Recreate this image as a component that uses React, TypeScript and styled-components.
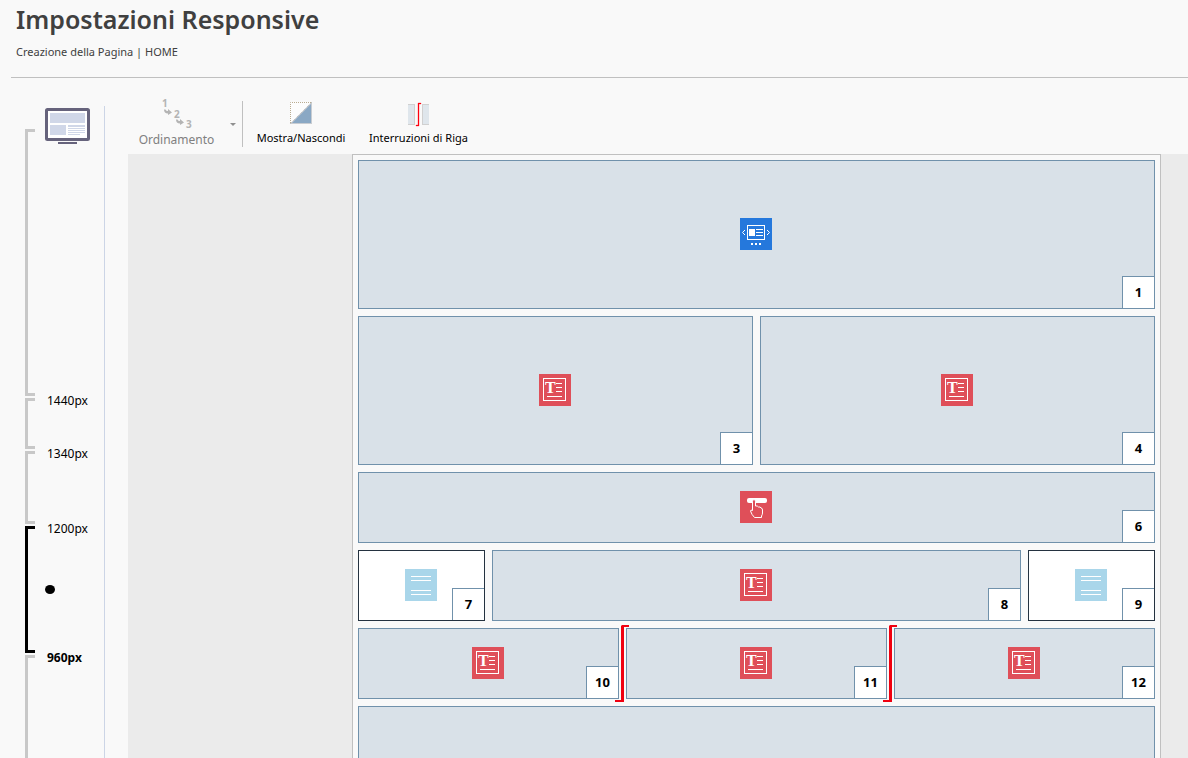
import React from "react";
import styled, { createGlobalStyle, css } from "styled-components";

const GlobalStyle = createGlobalStyle`
  * { box-sizing: border-box; }
  body {
    margin: 0;
    background: #f9f9f9;
    color: #000;
    font-family: "Noto Sans", "Open Sans", sans-serif;
    font-size: 12px;
  }
`;

const Shell = styled.div`
  display: flex;
  flex-direction: column;
  height: 100vh;
  overflow: hidden;
`;

const Header = styled.header`
  flex: none;
  margin-left: 11px;
  padding: 1px 5px 16px;
  border-bottom: 1px solid #c0c0c0;
  color: #404040;
`;

const Title = styled.h1`
  margin: 0;
  font-size: 25px;
  line-height: 36px;
  font-weight: 600;
`;

const Subtitle = styled.p`
  margin: 6px 0 0;
  font-size: 11px;
  line-height: 18px;
`;

const Body = styled.div`
  display: flex;
  flex: 1;
  min-height: 0;
`;

const Ruler = styled.aside`
  flex: none;
  width: 105px;
  margin-top: 28px;
  padding: 23px 0 0 25px;
  border-right: 1px solid #ccd5e6;
`;

const Segments = styled.ol`
  display: flex;
  flex-direction: column;
  gap: 2px;
  height: 100%;
  margin: 0;
  padding: 0;
  list-style: none;
`;

const Segment = styled.li<{ $size?: number }>`
  display: flex;
  gap: 10px;
  ${(p) => (p.$size ? css`flex: none; height: ${p.$size}px;` : css`flex: 1;`)}
`;

const Bracket = styled.span<{ $active?: boolean; $open?: boolean }>`
  width: 10px;
  border: 3px solid ${(p) => (p.$active ? "#000" : "#c8c8c8")};
  border-right: 0;
  ${(p) => p.$open && css`border-bottom: 0;`}
`;

const Marker = styled.div`
  display: grid;
  align-items: start;
  & > * { grid-area: 1 / 1; }
`;

const Width = styled.span<{ $bold?: boolean }>`
  margin-top: -6px;
  padding-left: 2px;
  line-height: 18px;
  font-weight: ${(p) => (p.$bold ? 700 : 400)};
`;

const Dot = styled.svg`
  align-self: center;
`;

const Monitor = styled.svg`
  margin-top: -21px;
`;

const Main = styled.main`
  display: flex;
  flex: 1;
  flex-direction: column;
  min-width: 0;
  margin-left: 23px;
`;

const Toolbar = styled.div`
  display: flex;
  flex: none;
  height: 56px;
  margin-top: 20px;
  padding-left: 4px;
`;

const ToolButton = styled.button<{ $width: number }>`
  display: flex;
  flex: none;
  flex-direction: column;
  align-items: center;
  width: ${(p) => p.$width}px;
  padding: 0;
  border: 0;
  background: none;
  color: #000;
  font: inherit;
  font-size: 11px;
  line-height: 18px;
  white-space: nowrap;
  &:disabled { color: #808080; }
  svg { flex: none; overflow: visible; }
`;

const OrderButton = styled(ToolButton)`
  font-size: 12px;
  line-height: 22px;
`;

const ArrowButton = styled(ToolButton)`
  padding-top: 10px;
`;

const Divider = styled.span`
  flex: none;
  width: 1px;
  height: 46px;
  margin: 3px 2px 0 0;
  background: #c0c0c0;
`;

const Canvas = styled.div`
  flex: 1;
  min-height: 0;
  overflow: hidden;
  padding: 0 27px 0 224px;
  background: #ebebeb;
`;

const Sheet = styled.div`
  display: grid;
  grid-template-columns: repeat(6, 1fr);
  grid-auto-rows: 71px;
  gap: 7px;
  padding: 5px;
  border: 1px solid #c0c0c0;
  background: #f9f9f9;
`;

const Cell = styled.div<{ $cols: number; $rows: number; $empty?: boolean }>`
  position: relative;
  display: grid;
  grid-column: span ${(p) => p.$cols};
  grid-row: span ${(p) => p.$rows};
  border: 1px solid ${(p) => (p.$empty ? "#243240" : "#7091ab")};
  background: ${(p) => (p.$empty ? "#fff" : "#d9e1e8")};
`;

const CellIcon = styled.svg`
  grid-area: 1 / 1;
  place-self: center;
  margin: 0 1px 1px 0;
`;

const Badge = styled.span`
  grid-area: 1 / 1;
  place-self: end;
  width: 32px;
  height: 32px;
  border: solid #7091ab;
  border-width: 1px 0 0 1px;
  background: #fff;
  font-size: 13px;
  line-height: 30px;
  font-weight: 700;
  text-align: center;
`;

const BreakMark = styled.svg`
  position: absolute;
  z-index: 1;
  top: -4px;
  right: -11px;
`;

type Kind = "slider" | "text" | "button" | "blank";

const art: Record<Kind, { fill: string; drawing: React.ReactNode }> = {
  slider: {
    fill: "#2578dc",
    drawing: (
      <>
        <rect x="7.5" y="7.5" width="17" height="14" fill="none" stroke="#fff" />
        <path
          fill="#fff"
          d="M9 11h6v7H9zM16 11h7v1h-7zM16 14h7v1h-7zM16 17h7v1h-7zM11 25h2v2h-2zM15 25h2v2h-2zM19 25h2v2h-2z"
        />
        <path d="M5 12 2.500 14.500 5 17M27 12l2.500 2.500L27 17" fill="none" stroke="#fff" />
      </>
    ),
  },
  text: {
    fill: "#df4f59",
    drawing: (
      <>
        <rect x="4.500" y="4.500" width="22" height="22" fill="none" stroke="#fff" />
        <text x="6" y="19" fill="#fff" fontFamily="Liberation Serif, serif" fontWeight="700" fontSize="16">
          T
        </text>
        <path fill="#fff" d="M17 9h6v1h-6zM17 13h6v1h-6zM17 17h6v1h-6zM8 22h15v1H8z" />
      </>
    ),
  },
  button: {
    fill: "#df4f59",
    drawing: (
      <>
        <rect x="7" y="7" width="20" height="5" rx="2" fill="#fff" />
        <path
          d="M12.500 19.500V10.500q0-2 1.500-2t1.500 2V15q2-.500 3 1 2-.500 2.500 1 1.500 0 1.500 2v3q0 1.500-1 3v1.500h-7q-3-3-4-6.500 0-1.500 2-.500z"
          fill="#df4f59"
          stroke="#fff"
        />
      </>
    ),
  },
  blank: {
    fill: "#a9d6ea",
    drawing: <path fill="#fff" d="M6 7h20v1H6zM6 11h20v1H6zM6 21h20v1H6zM6 25h20v1H6z" />,
  },
};

const cells: { n?: number; cols: number; rows: number; kind?: Kind; lineBreak?: boolean }[] = [
  { n: 1, cols: 6, rows: 2, kind: "slider" },
  { n: 3, cols: 3, rows: 2, kind: "text" },
  { n: 4, cols: 3, rows: 2, kind: "text" },
  { n: 6, cols: 6, rows: 1, kind: "button" },
  { n: 7, cols: 1, rows: 1, kind: "blank" },
  { n: 8, cols: 4, rows: 1, kind: "text" },
  { n: 9, cols: 1, rows: 1, kind: "blank" },
  { n: 10, cols: 2, rows: 1, kind: "text", lineBreak: true },
  { n: 11, cols: 2, rows: 1, kind: "text", lineBreak: true },
  { n: 12, cols: 2, rows: 1, kind: "text" },
  { cols: 6, rows: 2 },
];

const segments = [
  { size: 267 },
  { size: 51, label: "1440px" },
  { size: 73, label: "1340px" },
  { size: 127, label: "1200px", active: true },
  { label: "960px", bold: true },
];

function MonitorIcon() {
  return (
    <Monitor width="45" height="36" aria-label="Desktop">
      <rect x="1.500" y="1.500" width="42" height="30" rx="1" fill="#fff" stroke="#66637c" strokeWidth="3" />
      <path fill="#d0d7e8" d="M5 5h35v10H5zM5 17h16v10H5zM23 17h17v2H23zM23 20h17v1H23zM23 22h17v1H23zM23 24h17v1H23zM23 26h12v1H23z" />
      <path fill="#66637c" d="M13 34h19v2H13z" />
    </Monitor>
  );
}

function OrderIcon() {
  return (
    <svg width="35" height="31" fill="#b4b4b4" fontFamily="Noto Sans, sans-serif" fontSize="10" fontWeight="700">
      <text x="3" y="9">1</text>
      <text x="15" y="20">2</text>
      <text x="27" y="30">3</text>
      <path d="M5 11.500h1.500q.500 1.500 2.500 1.500V11l4 3.500-4 2.500v-1.500q-4 0-4-4zM17 21.500h1.500q.500 1.500 2.500 1.500V21l4 3.500-4 2.500v-1.500q-4 0-4-4z" />
    </svg>
  );
}

function ShowHideIcon() {
  return (
    <svg width="22" height="31">
      <path d="M0 4h21L0 26z" fill="#fff" opacity="0.6" />
      <path d="M22 4v22H0z" fill="#c9cdd2" />
      <path d="M21 6v19H2z" fill="#8aa8c4" />
      <path d="M0.500 25V4.500H21" fill="none" stroke="#b9ab90" strokeDasharray="1 1" />
      <path d="M0 26 22 4" stroke="#b4b4b4" strokeDasharray="1 1" />
    </svg>
  );
}

function RowBreakIcon() {
  return (
    <svg width="21" height="31">
      <path d="M0 6h7v20H0zM14 6h7v20h-7z" fill="#dfe6ec" />
      <path d="M0 6.500h7M14 6.500h7M0 26.500h7M14 26.500h7M6.500 6v21M14.500 6v21" stroke="#d0d0d0" />
      <path d="M10 5h3v1h-2v22H8v-1h2z" fill="#ff0010" stroke="#ff0010" strokeWidth="0.300" />
    </svg>
  );
}

export default function App() {
  return (
    <>
      <GlobalStyle />
      <Shell>
        <Header>
          <Title>Impostazioni Responsive</Title>
          <Subtitle>Creazione della Pagina | HOME</Subtitle>
        </Header>
        <Body>
          <Ruler>
            <Segments>
              {segments.map((s, i) => (
                <Segment key={i} $size={s.size}>
                  <Bracket $active={s.active} $open={!s.size} />
                  <Marker>
                    {s.label ? <Width $bold={s.bold}>{s.label}</Width> : <MonitorIcon />}
                    {s.active && (
                      <Dot width="10" height="9">
                        <ellipse cx="5" cy="4.500" rx="5" ry="4.500" />
                      </Dot>
                    )}
                  </Marker>
                </Segment>
              ))}
            </Segments>
          </Ruler>
          <Main>
            <Toolbar>
              <OrderButton $width={89} disabled>
                <OrderIcon />
                Ordinamento
              </OrderButton>
              <ArrowButton $width={21} disabled aria-label="Opzioni di ordinamento">
                <svg width="5" height="30">
                  <path d="M1 15h6L4 18z" fill="#909090" />
                </svg>
              </ArrowButton>
              <Divider />
              <ToolButton $width={112}>
                <ShowHideIcon />
                Mostra/Nascondi
              </ToolButton>
              <ToolButton $width={123}>
                <RowBreakIcon />
                Interruzioni di Riga
              </ToolButton>
            </Toolbar>
            <Canvas>
              <Sheet>
                {cells.map((c, i) => (
                  <Cell key={i} $cols={c.cols} $rows={c.rows} $empty={c.kind === "blank"}>
                    {c.kind && (
                      <CellIcon width="32" height="32">
                        <rect width="32" height="32" fill={art[c.kind].fill} />
                        {art[c.kind].drawing}
                      </CellIcon>
                    )}
                    {c.n && <Badge>{c.n}</Badge>}
                    {c.lineBreak && (
                      <BreakMark width="14" height="77">
                        <path d="M6 1 7 0h7v2H9v75H0v-2h6z" fill="#f00010" />
                      </BreakMark>
                    )}
                  </Cell>
                ))}
              </Sheet>
            </Canvas>
          </Main>
        </Body>
      </Shell>
    </>
  );
}
